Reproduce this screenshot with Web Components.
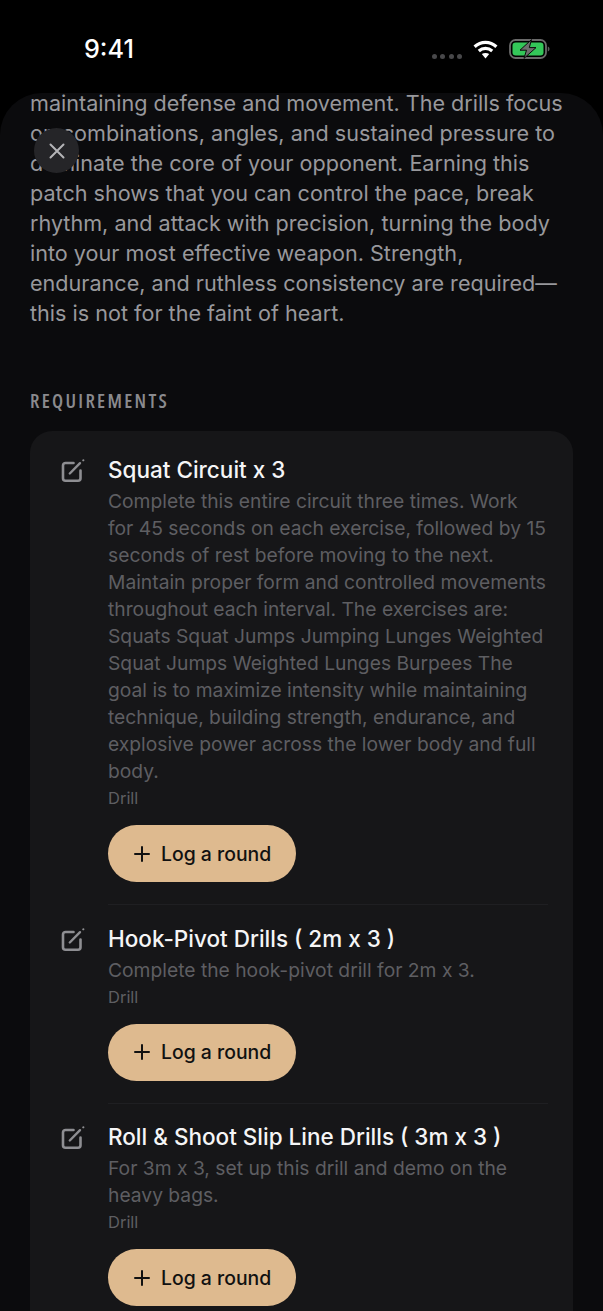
<!DOCTYPE html>
<html>
<head>
<meta charset="utf-8">
<title>Requirements</title>
<style>
  html, body { margin: 0; background: #000; }
  body { width: 603px; height: 1311px; overflow: hidden; font-family: Inter, "Liberation Sans", sans-serif; }
</style>
</head>
<body>
<patch-screen>
  <status-bar slot="status"></status-bar>
  <close-button slot="close"></close-button>
  <patch-intro>maintaining defense and movement. The drills focus on combinations, angles, and sustained pressure to dominate the core of your opponent. Earning this patch shows that you can control the pace, break rhythm, and attack with precision, turning the body into your most effective weapon. Strength, endurance, and ruthless consistency are required—this is not for the faint of heart.</patch-intro>
  <section-label>REQUIREMENTS</section-label>
  <requirement-list>
    <requirement-row title="Squat Circuit x 3" kind="Drill">Complete this entire circuit three times. Work for 45 seconds on each exercise, followed by 15 seconds of rest before moving to the next. Maintain proper form and controlled movements throughout each interval. The exercises are: Squats Squat Jumps Jumping Lunges Weighted Squat Jumps Weighted Lunges Burpees The goal is to maximize intensity while maintaining technique, building strength, endurance, and explosive power across the lower body and full body.</requirement-row>
    <requirement-row title="Hook-Pivot Drills ( 2m x 3 )" kind="Drill">Complete the hook-pivot drill for 2m x 3.</requirement-row>
    <requirement-row title="Roll &amp; Shoot Slip Line Drills ( 3m x 3 )" kind="Drill">For 3m x 3, set up this drill and demo on the heavy bags.</requirement-row>
  </requirement-list>
</patch-screen>

<script>
class PatchScreen extends HTMLElement {
  constructor() {
    super();
    this.attachShadow({ mode: "open" });
    this.shadowRoot.innerHTML = `
      <style>
        :host { display: block; position: relative; width: 603px; height: 1311px; overflow: hidden; background: #000; color: #fff; }
        .sheet { display: flow-root; height: 1218px; box-sizing: border-box; padding: 0 30px; background: #0b0b0d; border-radius: 42px 42px 0 0; }
        ::slotted([slot="close"]) { position: absolute; left: 34px; top: 128px; }
      </style>
      <slot name="status"></slot>
      <div class="sheet"><slot></slot></div>
      <slot name="close"></slot>
    `;
  }
}

class StatusBar extends HTMLElement {
  constructor() {
    super();
    this.attachShadow({ mode: "open" });
    this.shadowRoot.innerHTML = `
      <style>
        :host { display: flex; align-items: center; justify-content: space-between; height: 93px; box-sizing: border-box; padding: 5px 53px 0 84px; background: #000; }
        .time { font: 500 25.200px/30px Inter, sans-serif; color: #fff; }
        .icons { display: flex; align-items: center; }
        .dots { display: flex; gap: 3.300px; margin: 15px 11px 0 0; }
        .dots i { width: 5px; height: 5px; border-radius: 50%; background: #48484a; }
        svg { display: block; }
      </style>
      <span class="time">9:41</span>
      <div class="icons">
        <div class="dots"><i></i><i></i><i></i><i></i></div>
        <svg width="25" height="19" viewBox="0 0 25 19" style="margin-right:11px">
          <g fill="none" stroke="#fff" stroke-width="3.200">
            <path d="M1.600 6.800C7.900 1 17.100 1 23.400 6.800"/>
            <path d="M5.800 11C9.700 7.600 15.300 7.600 19.200 11"/>
          </g>
          <path d="M8.800 14C11 12.500 14 12.500 16.200 14L12.500 18.500Z" fill="#fff"/>
        </svg>
        <svg width="41" height="20" viewBox="0 0 41 20">
          <rect x="1" y="1" width="36" height="18" rx="5.500" fill="none" stroke="#6a6a6a" stroke-width="1.800"/>
          <rect x="3.500" y="3.500" width="31" height="13" rx="3.200" fill="#34c759"/>
          <path d="M38.800 7.500c1.300.4 1.700 1.300 1.700 2.500s-.4 2.100-1.700 2.500Z" fill="#5c5c5c"/>
          <path d="M22.500 .6 11 11.200h6.500L15 19.400l12-10.800h-6.700Z" fill="#6e6e6e" stroke="#0b0b0b" stroke-width="1"/>
        </svg>
      </div>
    `;
  }
}

class CloseButton extends HTMLElement {
  constructor() {
    super();
    this.attachShadow({ mode: "open" });
    this.shadowRoot.innerHTML = `
      <style>
        :host { display: flex; align-items: center; justify-content: center; width: 45px; height: 45px; border-radius: 50%; background: #252528; }
      </style>
      <svg width="18" height="18" viewBox="0 0 18 18" fill="none" stroke="#b4b4b7" stroke-width="2" stroke-linecap="round">
        <path d="M2.500 2.500 15.500 15.500M15.500 2.500 2.500 15.500"/>
      </svg>
    `;
  }
}

class PatchIntro extends HTMLElement {
  constructor() {
    super();
    this.attachShadow({ mode: "open" });
    this.shadowRoot.innerHTML = `
      <style>
        :host { display: block; margin-top: -5px; font: 400 21.600px/30px Inter, sans-serif; color: #98989c; }
      </style>
      <slot></slot>
    `;
  }
}

class SectionLabel extends HTMLElement {
  constructor() {
    super();
    this.attachShadow({ mode: "open" });
    this.shadowRoot.innerHTML = `
      <style>
        :host { display: block; margin-top: 61px; font: 600 19.500px/24px "Open Sans", "Roboto", sans-serif; font-stretch: 75%; letter-spacing: 2.300px; color: #8a8a8e; }
      </style>
      <slot></slot>
    `;
  }
}

class RequirementList extends HTMLElement {
  constructor() {
    super();
    this.attachShadow({ mode: "open" });
    this.shadowRoot.innerHTML = `
      <style>
        :host { display: block; margin-top: 18px; padding: 25px 25px 80px 30px; background: #161618; border-radius: 22px; }
      </style>
      <slot></slot>
    `;
  }
}

class RequirementRow extends HTMLElement {
  constructor() {
    super();
    this.attachShadow({ mode: "open" });
    this.shadowRoot.innerHTML = `
      <style>
        :host { display: grid; grid-template-columns: 24px 1fr; column-gap: 24px; }
        :host(:not(:first-child)) { padding-top: 19.500px; }
        :host(:not(:last-child)) .body { padding-bottom: 22px; border-bottom: 1px solid #1f1f22; }
        .icon { display: block; margin-top: 2px; }
        .title { font: 500 22.500px/28px Inter, sans-serif; color: #f5f5f6; }
        .desc { margin-top: 4px; padding-right: 1px; font: 400 19.250px/27px Inter, sans-serif; color: #5e5e62; }
        .kind { font: 400 16.500px/27px Inter, sans-serif; color: #5e5e62; }
        log-button { margin-top: 13px; }
      </style>
      <svg class="icon" width="26" height="26" viewBox="0 0 26 26" fill="none" stroke="#8e8e92" stroke-width="2.600" stroke-linecap="round" stroke-linejoin="round">
        <path d="M13.500 5H5.500A2.500 2.500 0 0 0 3 7.500v12.800A2.500 2.500 0 0 0 5.500 22.800h12.500a2.500 2.500 0 0 0 2.500-2.500V12.500"/>
        <path d="M9.800 15.500 20 5.200" stroke-width="2.400"/>
        <path d="M23.200 2.400 23.400 2.200" stroke-width="2"/>
      </svg>
      <div class="body">
        <div class="title"></div>
        <div class="desc"><slot></slot></div>
        <div class="kind"></div>
        <log-button></log-button>
      </div>
    `;
    this.shadowRoot.querySelector(".title").textContent = this.getAttribute("title");
    this.shadowRoot.querySelector(".kind").textContent = this.getAttribute("kind");
  }
}

class LogButton extends HTMLElement {
  constructor() {
    super();
    this.attachShadow({ mode: "open" });
    this.shadowRoot.innerHTML = `
      <style>
        :host { display: flex; align-items: center; gap: 11px; width: 188px; height: 57px; box-sizing: border-box; padding-left: 26px; border-radius: 29px; background: #deba8f; color: #111; font: 500 19.400px/24px Inter, sans-serif; }
        svg { display: block; flex: none; }
      </style>
      <svg width="16" height="16" viewBox="0 0 16 16" fill="none" stroke="#111" stroke-width="2" stroke-linecap="round">
        <path d="M8 1v14M1 8h14"/>
      </svg>
      <span>Log a round</span>
    `;
  }
}

customElements.define("patch-screen", PatchScreen);
customElements.define("status-bar", StatusBar);
customElements.define("close-button", CloseButton);
customElements.define("patch-intro", PatchIntro);
customElements.define("section-label", SectionLabel);
customElements.define("requirement-list", RequirementList);
customElements.define("requirement-row", RequirementRow);
customElements.define("log-button", LogButton);
</script>
</body>
</html>
